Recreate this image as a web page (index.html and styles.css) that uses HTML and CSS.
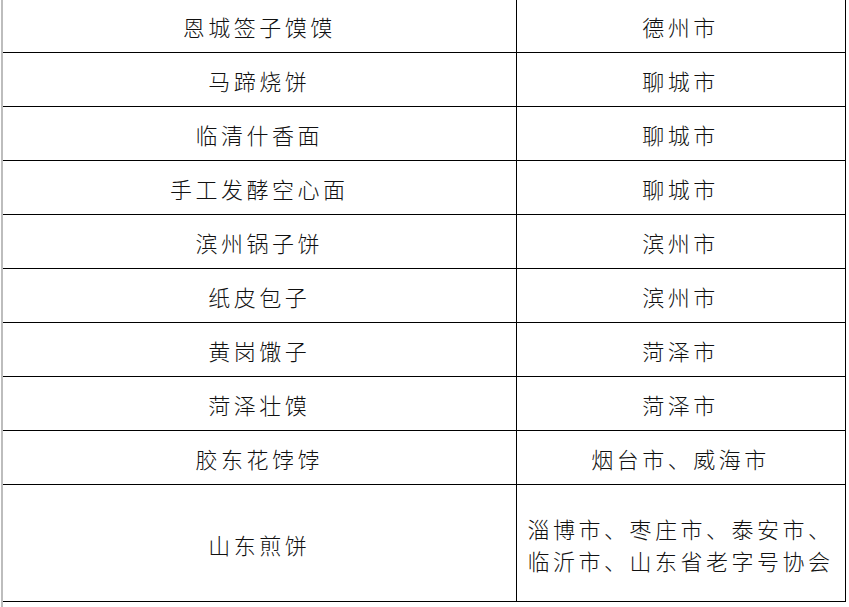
FILE: index.html
```html
<!DOCTYPE html>
<html lang="zh-CN">
<head>
<meta charset="utf-8">
<title>山东面食</title>
<link rel="stylesheet" href="styles.css">
</head>
<body>
<div class="page">
  <table class="grid">
    <tr><td class="name">恩城签子馍馍</td><td class="city">德州市</td></tr>
    <tr><td class="name">马蹄烧饼</td><td class="city">聊城市</td></tr>
    <tr><td class="name">临清什香面</td><td class="city">聊城市</td></tr>
    <tr><td class="name">手工发酵空心面</td><td class="city">聊城市</td></tr>
    <tr><td class="name">滨州锅子饼</td><td class="city">滨州市</td></tr>
    <tr><td class="name">纸皮包子</td><td class="city">滨州市</td></tr>
    <tr><td class="name">黄岗馓子</td><td class="city">菏泽市</td></tr>
    <tr><td class="name">菏泽壮馍</td><td class="city">菏泽市</td></tr>
    <tr><td class="name">胶东花饽饽</td><td class="city">烟台市、威海市</td></tr>
    <tr class="tall"><td class="name">山东煎饼</td><td class="city multi"><span class="line">淄博市、枣庄市、泰安市、</span><span class="line">临沂市、山东省老字号协会</span></td></tr>
  </table>
</div>
</body>
</html>
```
FILE: styles.css
```css
html, body {
  margin: 0;
  padding: 0;
  background: #ffffff;
}
.page {
  height: 607px;
  margin-left: 1px;
  border-left: 2px solid #bdbdbd;
  overflow: hidden;
  font-family: "Noto Sans CJK SC", "Noto Sans", sans-serif;
  font-weight: 300;
  color: #111111;
}
.grid {
  border-collapse: collapse;
  margin-top: -2px;
  table-layout: fixed;
}
.grid td {
  height: 54px;
  padding: 1px 0 0 0;
  box-sizing: border-box;
  border-top: 1px solid #000;
  border-bottom: 1px solid #000;
  text-align: center;
  vertical-align: middle;
  font-size: 22px;
  letter-spacing: 3.5px;
  line-height: 28px;
  white-space: nowrap;
}
.grid td.name {
  width: 513px;
  border-right: 1px solid #000;
}
.grid td.city {
  width: 329px;
  border-right: 1px solid #000;
}
.grid tr.tall td {
  height: 117px;
}
.grid td.multi .line {
  display: block;
  line-height: 32px;
}
```
